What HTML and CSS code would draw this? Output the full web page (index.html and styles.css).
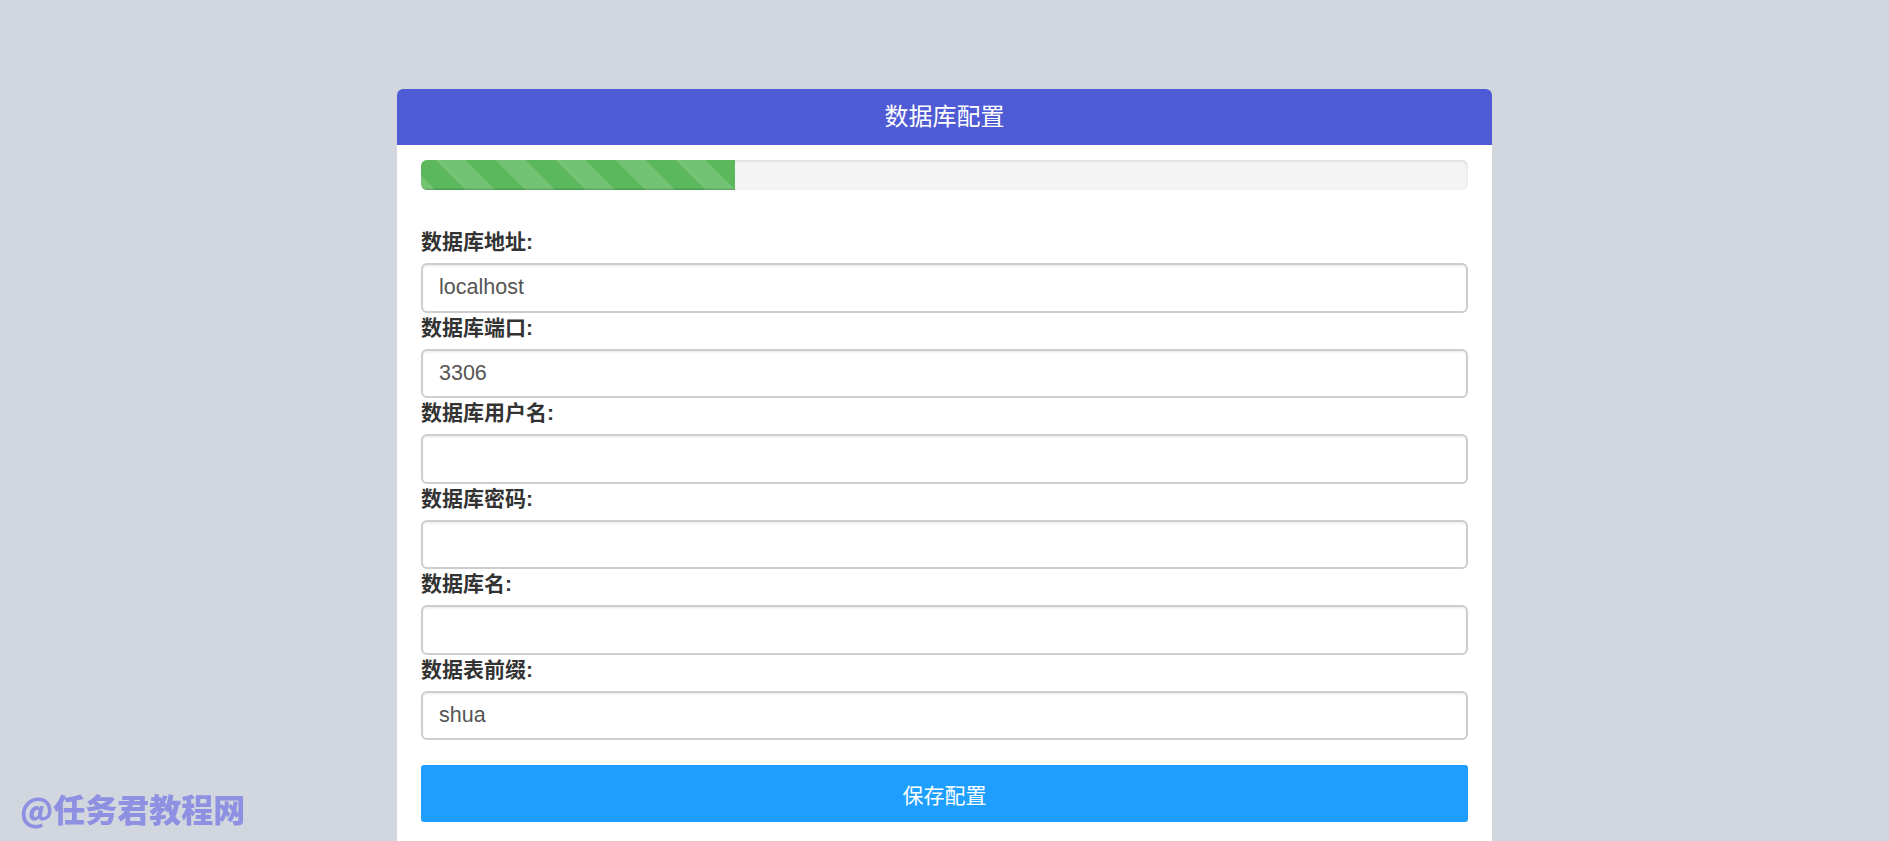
FILE: index.html
```html
<!DOCTYPE html>
<html lang="zh-CN">
<head>
<meta charset="utf-8">
<title>数据库配置</title>
<link rel="stylesheet" href="styles.css">
</head>
<body>
<div class="card">
  <div class="card-header">数据库配置</div>
  <div class="card-body">
    <div class="progress"><div class="progress-bar" style="width: 30%"></div></div>
    <form class="config-form">
      <div class="form-group">
        <label class="form-label">数据库地址:</label>
        <input class="form-input" type="text" value="localhost">
      </div>
      <div class="form-group">
        <label class="form-label">数据库端口:</label>
        <input class="form-input" type="text" value="3306">
      </div>
      <div class="form-group">
        <label class="form-label">数据库用户名:</label>
        <input class="form-input" type="text" value="">
      </div>
      <div class="form-group">
        <label class="form-label">数据库密码:</label>
        <input class="form-input" type="password" value="">
      </div>
      <div class="form-group">
        <label class="form-label">数据库名:</label>
        <input class="form-input" type="text" value="">
      </div>
      <div class="form-group">
        <label class="form-label">数据表前缀:</label>
        <input class="form-input" type="text" value="shua">
      </div>
      <button class="save-btn" type="button">保存配置</button>
    </form>
  </div>
</div>
<div class="watermark">@任务君教程网</div>
</body>
</html>
```

FILE: styles.css
```css
html, body {
  margin: 0;
  padding: 0;
  overflow: hidden;
}
body {
  background: #d2d6df;
  font-family: "Liberation Sans", "Noto Sans CJK SC", sans-serif;
  color: #333;
}
.card {
  width: 1095px;
  margin: 89px auto 0;
  background: #fff;
  border-radius: 6px 6px 0 0;
}
.card-header {
  height: 56px;
  line-height: 56px;
  background: #4f5bd5;
  color: #fff;
  font-size: 24px;
  text-align: center;
  border-radius: 6px 6px 0 0;
}
.card-body {
  padding: 15px 24px 40px;
}
.progress {
  height: 30px;
  background: #f4f4f4;
  border-radius: 6px;
  box-shadow: inset 0 1.5px 3px rgba(0, 0, 0, 0.1);
  overflow: hidden;
  margin-bottom: 37px;
}
.progress-bar {
  height: 100%;
  background-color: #5cb85c;
  background-image: linear-gradient(45deg, rgba(255,255,255,.15) 25%, transparent 25%, transparent 50%, rgba(255,255,255,.15) 50%, rgba(255,255,255,.15) 75%, transparent 75%, transparent);
  background-size: 60px 60px;
  background-position: 15px 0;
  box-shadow: inset 0 -1.5px 0 rgba(0, 0, 0, 0.15);
}
.config-form {
  margin: 0;
}
.form-label {
  display: block;
  font-size: 21px;
  font-weight: bold;
  line-height: 30px;
  margin-bottom: 6px;
  color: #333;
}
.form-input {
  display: block;
  width: 100%;
  box-sizing: border-box;
  height: 49.5px;
  margin: 0;
  padding: 0 16px;
  font-family: "Liberation Sans", "Noto Sans CJK SC", sans-serif;
  font-size: 21.5px;
  color: #555;
  background: #fff;
  border: 2px solid #cdcdcd;
  border-radius: 6px;
  box-shadow: inset 0 1.5px 1.5px rgba(0, 0, 0, 0.075);
  outline: none;
}
.save-btn {
  display: block;
  width: 100%;
  height: 57px;
  margin-top: 25px;
  padding: 0;
  background: #1e9fff;
  color: #fff;
  border: none;
  border-radius: 3px;
  font-family: "Liberation Sans", "Noto Sans CJK SC", sans-serif;
  font-size: 21px;
  cursor: pointer;
}
.watermark {
  position: fixed;
  left: 20px;
  bottom: 18px;
  line-height: 30px;
  font-family: "Noto Sans CJK SC", sans-serif;
  font-weight: 900;
  font-size: 32px;
  color: #8e90e2;
}
```
